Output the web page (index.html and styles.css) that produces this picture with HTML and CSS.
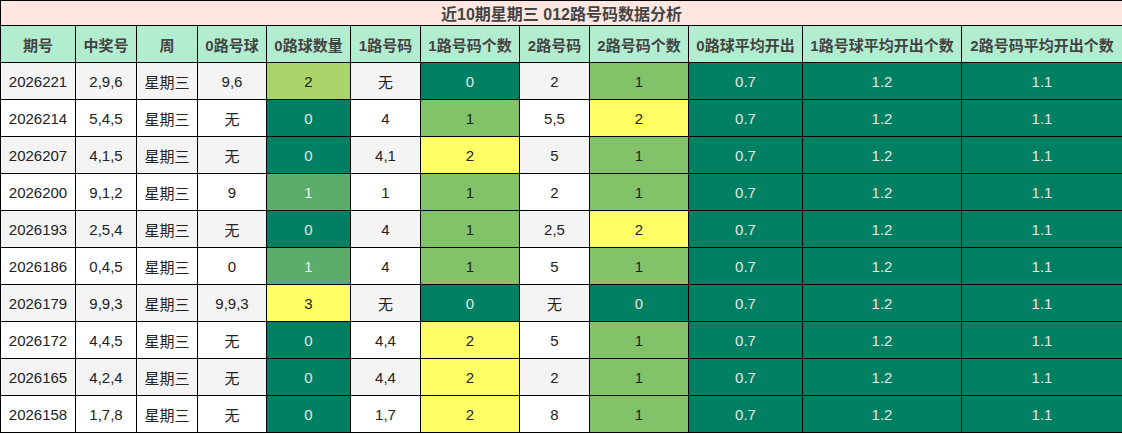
FILE: index.html
```html
<!DOCTYPE html>
<html lang="zh">
<head>
<meta charset="utf-8">
<title>近10期星期三 012路号码数据分析</title>
<link rel="stylesheet" href="styles.css">
</head>
<body>
<table class="grid">
  <colgroup>
    <col class="c1"><col class="c2"><col class="c3"><col class="c4"><col class="c5"><col class="c6">
    <col class="c7"><col class="c8"><col class="c9"><col class="c10"><col class="c11"><col class="c12">
  </colgroup>
  <thead>
    <tr class="title"><th colspan="12">近10期星期三 012路号码数据分析</th></tr>
    <tr class="head">
      <th>期号</th><th>中奖号</th><th>周</th><th>0路号球</th><th>0路球数量</th><th>1路号码</th>
      <th>1路号码个数</th><th>2路号码</th><th>2路号码个数</th><th>0路球平均开出</th><th>1路号球平均开出个数</th><th>2路号码平均开出个数</th>
    </tr>
  </thead>
  <tbody>
    <tr class="alt"><td>2026221</td><td>2,9,6</td><td>星期三</td><td>9,6</td><td class="lg">2</td><td>无</td><td class="dk">0</td><td>2</td><td class="gr">1</td><td class="dk">0.7</td><td class="dk">1.2</td><td class="dk">1.1</td></tr>
    <tr><td>2026214</td><td>5,4,5</td><td>星期三</td><td>无</td><td class="dk">0</td><td>4</td><td class="gr">1</td><td>5,5</td><td class="ye">2</td><td class="dk">0.7</td><td class="dk">1.2</td><td class="dk">1.1</td></tr>
    <tr class="alt"><td>2026207</td><td>4,1,5</td><td>星期三</td><td>无</td><td class="dk">0</td><td>4,1</td><td class="ye">2</td><td>5</td><td class="gr">1</td><td class="dk">0.7</td><td class="dk">1.2</td><td class="dk">1.1</td></tr>
    <tr><td>2026200</td><td>9,1,2</td><td>星期三</td><td>9</td><td class="md">1</td><td>1</td><td class="gr">1</td><td>2</td><td class="gr">1</td><td class="dk">0.7</td><td class="dk">1.2</td><td class="dk">1.1</td></tr>
    <tr class="alt"><td>2026193</td><td>2,5,4</td><td>星期三</td><td>无</td><td class="dk">0</td><td>4</td><td class="gr">1</td><td>2,5</td><td class="ye">2</td><td class="dk">0.7</td><td class="dk">1.2</td><td class="dk">1.1</td></tr>
    <tr><td>2026186</td><td>0,4,5</td><td>星期三</td><td>0</td><td class="md">1</td><td>4</td><td class="gr">1</td><td>5</td><td class="gr">1</td><td class="dk">0.7</td><td class="dk">1.2</td><td class="dk">1.1</td></tr>
    <tr class="alt"><td>2026179</td><td>9,9,3</td><td>星期三</td><td>9,9,3</td><td class="ye">3</td><td>无</td><td class="dk">0</td><td>无</td><td class="dk">0</td><td class="dk">0.7</td><td class="dk">1.2</td><td class="dk">1.1</td></tr>
    <tr><td>2026172</td><td>4,4,5</td><td>星期三</td><td>无</td><td class="dk">0</td><td>4,4</td><td class="ye">2</td><td>5</td><td class="gr">1</td><td class="dk">0.7</td><td class="dk">1.2</td><td class="dk">1.1</td></tr>
    <tr class="alt"><td>2026165</td><td>4,2,4</td><td>星期三</td><td>无</td><td class="dk">0</td><td>4,4</td><td class="ye">2</td><td>2</td><td class="gr">1</td><td class="dk">0.7</td><td class="dk">1.2</td><td class="dk">1.1</td></tr>
    <tr><td>2026158</td><td>1,7,8</td><td>星期三</td><td>无</td><td class="dk">0</td><td>1,7</td><td class="ye">2</td><td>8</td><td class="gr">1</td><td class="dk">0.7</td><td class="dk">1.2</td><td class="dk">1.1</td></tr>
  </tbody>
</table>
</body>
</html>
```
FILE: styles.css
```css
html, body {
  margin: 0;
  padding: 0;
  background: #ffffff;
}
body {
  font-family: "Liberation Sans", Arial, "Noto Sans CJK SC", sans-serif;
}
.grid {
  width: 1122px;
  border-collapse: collapse;
  table-layout: fixed;
  font-size: 15px;
  color: #222222;
}
.c1 { width: 75px; }
.c2 { width: 61px; }
.c3 { width: 61px; }
.c4 { width: 69px; }
.c5 { width: 84px; }
.c6 { width: 70px; }
.c7 { width: 99px; }
.c8 { width: 70px; }
.c9 { width: 99px; }
.c10 { width: 114px; }
.c11 { width: 159px; }
.c12 { width: 161px; }
.grid th, .grid td {
  border: 1px solid #000000;
  padding: 0;
  text-align: center;
  white-space: nowrap;
  overflow: hidden;
}
.title th {
  height: 24px;
  background: #fde7e0;
  color: #444444;
  font-size: 16px;
  font-weight: bold;
}
.head th {
  height: 36px;
  background: #b3edcf;
  color: #444444;
  font-size: 15px;
  font-weight: bold;
}
.grid td {
  height: 36px;
  background: #ffffff;
}
.grid tr.alt td {
  background: #f4f4f4;
}
.grid td.dk, .grid tr.alt td.dk {
  background: #008062;
  color: #e6e6e6;
}
.grid td.md, .grid tr.alt td.md {
  background: #5aad6a;
  color: #eeeeee;
}
.grid td.gr, .grid tr.alt td.gr {
  background: #82c36a;
  color: #222222;
}
.grid td.lg, .grid tr.alt td.lg {
  background: #a9d56a;
  color: #222222;
}
.grid td.ye, .grid tr.alt td.ye {
  background: #ffff66;
  color: #222222;
}
```
